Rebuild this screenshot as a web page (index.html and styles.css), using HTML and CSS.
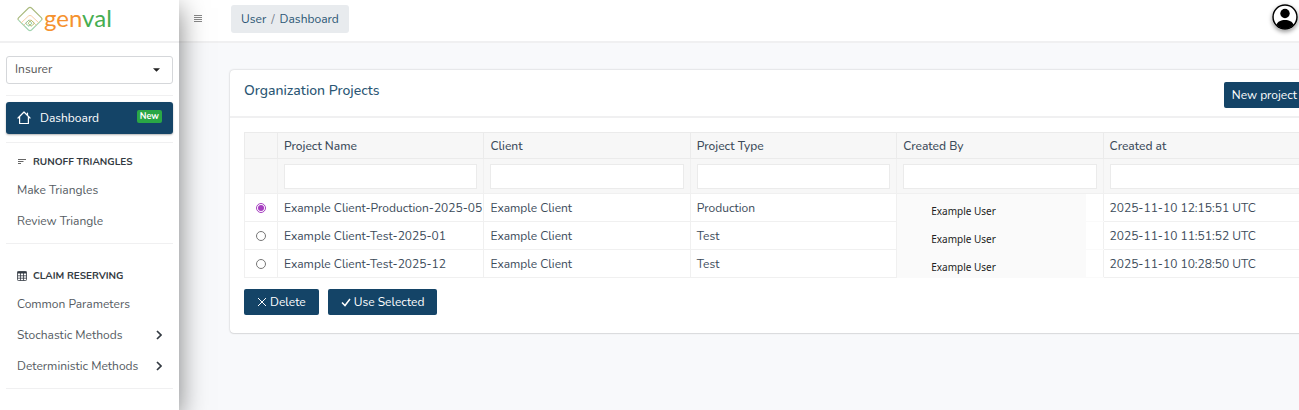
FILE: index.html
```
<!DOCTYPE html>
<html lang="en">
<head>
    <meta charset="UTF-8">
    <meta name="viewport" content="width=device-width, initial-scale=1">
    <title>Genval - Dashboard</title>
    <link rel="stylesheet" href="styles.css">
</head>
<body>
    <aside class="sidebar">
        <a class="brand" href="#">
            <svg class="brand-mark" viewBox="0 0 26 26" fill="none">
                <path d="M1.500 14.200Q0.500 13 1.500 11.800L11.500 2Q13 0.800 14.500 2L24.500 11.800Q25.500 13 24.500 14.200" stroke="#a9b97c" stroke-width="1.100"/>
                <path d="M1.500 14.200L11.500 24Q13 25.200 14.500 24L24.500 14.200" stroke="#9fd3ae" stroke-width="1.100"/>
                <path d="M4 17L11.500 10Q13 8.800 14.500 10L22 17" stroke="#f6c79c" stroke-width="0.900"/>
                <path d="M6.500 19.500L11.500 14.500Q13 13 14.500 14.500L19.500 19.500" stroke="#f3b48a" stroke-width="0.700"/>
                <rect x="9.500" y="15" width="4.500" height="4.500" rx="1" transform="rotate(45 11.750 17.250)" stroke="#7cc08a" stroke-width="0.900"/>
                <rect x="12" y="15" width="4.500" height="4.500" rx="1" transform="rotate(45 14.250 17.250)" stroke="#a8b860" stroke-width="0.900"/>
            </svg>
            <span class="brand-name"><span class="orange">gen</span><span class="green">val</span></span>
        </a>
        <div class="role">
            <select class="role-select" aria-label="Role">
                <option>Insurer</option>
            </select>
            <svg class="caret" viewBox="0 0 8 4"><path d="M0 0h8L4 4z" fill="#222"/></svg>
        </div>
        <nav class="menu">
            <div class="group">
                <a class="item active" href="#">
                    <svg class="home" viewBox="0 0 14 14" fill="none" stroke="#fff" stroke-width="1.200" stroke-linejoin="round" stroke-linecap="round"><path d="M1 7L7 1l6 6M10.500 4.500V2M2.600 5.600V12.500h8.800V5.600"/></svg>
                    <span>Dashboard</span>
                    <span class="badge">New</span>
                </a>
            </div>
            <div class="group runoff">
                <h2 class="group-title">
                    <svg class="title-icon" viewBox="0 0 10 10" stroke="#666" stroke-width="1"><path d="M1 2.500h8M1 4.500h5.500M1 6.500h3"/></svg>
                    RUNOFF TRIANGLES
                </h2>
                <a class="item" href="#">Make Triangles</a>
                <a class="item" href="#">Review Triangle</a>
            </div>
            <div class="group claim">
                <h2 class="group-title">
                    <svg class="title-icon" viewBox="0 0 10 10" fill="none" stroke="#333a42" stroke-width="0.800"><rect x="0.500" y="0.500" width="9" height="9" rx="0.800"/><path d="M0.500 1.500h9" stroke-width="2"/><path d="M0.500 4.800h9M0.500 7.200h9M3.500 2v7.500M6.500 2v7.500"/></svg>
                    CLAIM RESERVING
                </h2>
                <a class="item" href="#">Common Parameters</a>
                <a class="item" href="#">Stochastic Methods
                    <svg class="chevron" viewBox="0 0 6 10"><path d="M1 1l4 4-4 4"/></svg>
                </a>
                <a class="item" href="#">Deterministic Methods
                    <svg class="chevron" viewBox="0 0 6 10"><path d="M1 1l4 4-4 4"/></svg>
                </a>
            </div>
        </nav>
    </aside>

    <div class="page">
        <header class="topbar">
            <button class="toggle" aria-label="Toggle menu">
                <svg viewBox="0 0 8 8" stroke="#888" stroke-width="1"><path d="M0 0.500h8M0 2.500h8M0 4.500h8M0 6.500h8"/></svg>
            </button>
            <nav class="breadcrumb">
                <a href="#">User</a><span class="slash">/</span><a href="#">Dashboard</a>
            </nav>
            <button class="avatar" aria-label="Account">
                <svg viewBox="0 0 26 26"><circle cx="13" cy="13" r="12" fill="#fff" stroke="#000" stroke-width="1.500"/><circle cx="13" cy="9.500" r="4.700"/><path d="M4.300 20.800C5.600 17.500 9 16 13 16s7.400 1.500 8.700 4.800A12 12 0 0 1 13 25a12 12 0 0 1-8.700-4.200z"/></svg>
            </button>
        </header>

        <main class="content">
            <section class="card">
                <div class="card-header">
                    <h1>Organization Projects</h1>
                    <button class="btn">New project</button>
                </div>
                <div class="card-body">
                    <table class="projects">
                        <thead>
                            <tr class="names">
                                <th class="pick"></th>
                                <th>Project Name</th>
                                <th>Client</th>
                                <th>Project Type</th>
                                <th>Created By</th>
                                <th>Created at</th>
                            </tr>
                            <tr class="filters">
                                <td></td>
                                <td><input type="text" aria-label="Filter project name"></td>
                                <td><input type="text" aria-label="Filter client"></td>
                                <td><input type="text" aria-label="Filter project type"></td>
                                <td><input type="text" aria-label="Filter created by"></td>
                                <td><input type="text" aria-label="Filter created at"></td>
                            </tr>
                        </thead>
                        <tbody>
                            <tr>
                                <td class="pick"><input type="radio" name="project" id="p1" checked></td>
                                <td><label for="p1">Example Client-Production-2025-05</label></td>
                                <td>Example Client</td>
                                <td>Production</td>
                                <td class="user">Example User</td>
                                <td>2025-11-10 12:15:51 UTC</td>
                            </tr>
                            <tr>
                                <td class="pick"><input type="radio" name="project" id="p2"></td>
                                <td><label for="p2">Example Client-Test-2025-01</label></td>
                                <td>Example Client</td>
                                <td>Test</td>
                                <td class="user">Example User</td>
                                <td>2025-11-10 11:51:52 UTC</td>
                            </tr>
                            <tr>
                                <td class="pick"><input type="radio" name="project" id="p3"></td>
                                <td><label for="p3">Example Client-Test-2025-12</label></td>
                                <td>Example Client</td>
                                <td>Test</td>
                                <td class="user">Example User</td>
                                <td>2025-11-10 10:28:50 UTC</td>
                            </tr>
                        </tbody>
                    </table>
                    <div class="actions">
                        <button class="btn wide">
                            <svg viewBox="0 0 10 10"><path d="M1 1l8 8M9 1L1 9"/></svg>
                            Delete
                        </button>
                        <button class="btn wide">
                            <svg class="check" viewBox="0 0 10 10"><path d="M1 5.500l3 3L9 2"/></svg>
                            Use Selected
                        </button>
                    </div>
                </div>
            </section>
        </main>
    </div>
</body>
</html>
```
FILE: styles.css
```
* {
    box-sizing: border-box;
}

body {
    margin: 0;
    display: flex;
    min-height: 100vh;
    overflow-x: hidden;
    background: #f8f9fb;
    color: #3c4b5a;
    font-family: Nunito, Lato, "Open Sans", sans-serif;
    font-size: 12px;
    line-height: 18px;
}

a {
    color: inherit;
    text-decoration: none;
}

button {
    font: inherit;
    cursor: pointer;
}

/* Sidebar */
.sidebar {
    flex: 0 0 179px;
    position: relative;
    z-index: 2;
    background: #fff;
    box-shadow: 0 8px 26px rgba(0, 0, 0, 0.500);
}

.brand {
    display: flex;
    align-items: center;
    height: 43px;
    padding: 0 17px 4px;
    border-bottom: 2px solid #f0f0f1;
}

.brand-mark {
    width: 26px;
    height: 26px;
}

.brand-name {
    margin: 0 0 2px 1px;
    font-family: Lato, sans-serif;
    font-size: 24px;
    font-weight: 400;
    line-height: 30px;
}

.orange {
    color: #f5922f;
}

.green {
    color: #45ad50;
}

.role {
    position: relative;
    margin: 13px 6px 11px;
}

.role-select {
    appearance: none;
    display: block;
    width: 100%;
    height: 28px;
    padding: 0 8px 2px;
    border: 1px solid #d5d7da;
    border-radius: 3px;
    background: #fff;
    color: #555;
    font: inherit;
}

.caret {
    position: absolute;
    top: 12px;
    right: 13px;
    width: 7px;
    height: 4px;
}

.menu {
    padding: 0 6px;
}

.group {
    padding: 6px 0 8px;
    border-top: 1px solid #f0f0f1;
}

.group.runoff {
    padding-top: 7px;
    padding-bottom: 7px;
}

.group.claim {
    padding: 20px 0 7px;
    border-bottom: 1px solid #f0f0f1;
}

.group-title {
    display: flex;
    align-items: center;
    gap: 6px;
    height: 24px;
    margin: 0;
    padding: 0 11px;
    color: #333a42;
    font-size: 10px;
    font-weight: 700;
}

.title-icon {
    width: 10px;
    height: 10px;
}

.item {
    display: flex;
    align-items: center;
    height: 31px;
    padding: 0 11px;
    color: #555b62;
}

.item.active {
    height: 32px;
    border-radius: 3px;
    background: #144467;
    box-shadow: 0 1px 2px rgba(0, 0, 0, 0.300);
    color: #fff;
}

.home {
    width: 14px;
    height: 14px;
    margin-right: 9px;
}

.badge {
    margin: 0 0 4px auto;
    padding: 0 3px;
    border-radius: 2px;
    background: #2aa745;
    font-size: 9px;
    font-weight: 700;
    line-height: 13px;
}

.chevron {
    width: 6px;
    height: 10px;
    margin-left: auto;
    fill: none;
    stroke: #333a42;
    stroke-width: 1.700;
}

/* Top bar */
.page {
    flex: 1;
    min-width: 0;
}

.topbar {
    display: flex;
    align-items: center;
    height: 43px;
    padding: 0 1px 3px 15px;
    border-bottom: 2px solid #f0f0f1;
    background: #fff;
}

.toggle {
    display: flex;
    width: 8px;
    padding: 0;
    border: 0;
    background: none;
}

.breadcrumb {
    display: flex;
    gap: 5px;
    margin-left: 29px;
    padding: 5px 10px;
    border-radius: 3px;
    background: #e8ebee;
    color: #2b5674;
}

.slash {
    color: #75808a;
}

.avatar {
    width: 26px;
    height: 26px;
    margin: 0 0 5px auto;
    padding: 0;
    border: 0;
    border-radius: 50%;
    background: none;
    box-shadow: 0 2px 4px rgba(0, 0, 0, 0.400);
}

.avatar svg {
    display: block;
}

/* Projects card, wider than the view */
.content {
    padding: 27px 0 0 51px;
    overflow: hidden;
}

.card {
    margin-right: -26px;
    margin-bottom: 4px;
    border-radius: 4px;
    background: #fff;
    box-shadow: 0 0 2px rgba(0, 0, 0, 0.250), 0 1px 1px rgba(0, 0, 0, 0.060);
}

.card-header {
    display: flex;
    justify-content: space-between;
    align-items: center;
    height: 48px;
    padding: 4px 20px 0 14px;
    border-bottom: 2px solid #f0f0f1;
}

.card-header h1 {
    margin: 0 0 8px;
    color: #2b5674;
    font-size: 14px;
    font-weight: 500;
}

.card-body {
    padding: 14px 15px 18px 14px;
}

.btn {
    display: flex;
    align-items: center;
    gap: 4px;
    height: 26px;
    padding: 0 8px;
    border: 0;
    border-radius: 2px;
    background: #144467;
    color: #fff;
}

.btn.wide {
    gap: 3px;
    padding: 0 13px;
}

.btn svg {
    width: 10px;
    height: 10px;
    fill: none;
    stroke: #fff;
}

.btn .check {
    stroke-width: 1.500;
}

.projects {
    width: 100%;
    table-layout: fixed;
    border-collapse: collapse;
    border: 1px solid #ebebeb;
}

.projects th,
.projects td {
    height: 28px;
    padding: 0 6px;
    border: 1px solid #f0f0f0;
    text-align: left;
    white-space: nowrap;
}

.projects thead {
    background: #f7f7f7;
}

.projects th {
    height: 26px;
    border-color: #ebebeb;
    font-weight: 500;
}

.projects .filters td {
    height: 35px;
}

.filters input {
    display: block;
    width: 100%;
    height: 25px;
    border: 1px solid #ebebeb;
    background: #fff;
    font: inherit;
}

.projects .pick {
    width: 33px;
    text-align: center;
}

.pick input {
    display: block;
    width: 10px;
    height: 10px;
    margin: 0 auto;
    accent-color: #a63fc0;
}

.projects .user {
    padding: 7px 0 0 34px;
    border-top-color: #fafafa;
    border-bottom-color: #fafafa;
    background: linear-gradient(#fafafa, #fafafa) 0 0 / 189px 100% no-repeat;
    color: #222;
    font-family: "Noto Sans", sans-serif;
    font-size: 10px;
}

.actions {
    display: flex;
    gap: 9px;
    margin-top: 11px;
}
```
